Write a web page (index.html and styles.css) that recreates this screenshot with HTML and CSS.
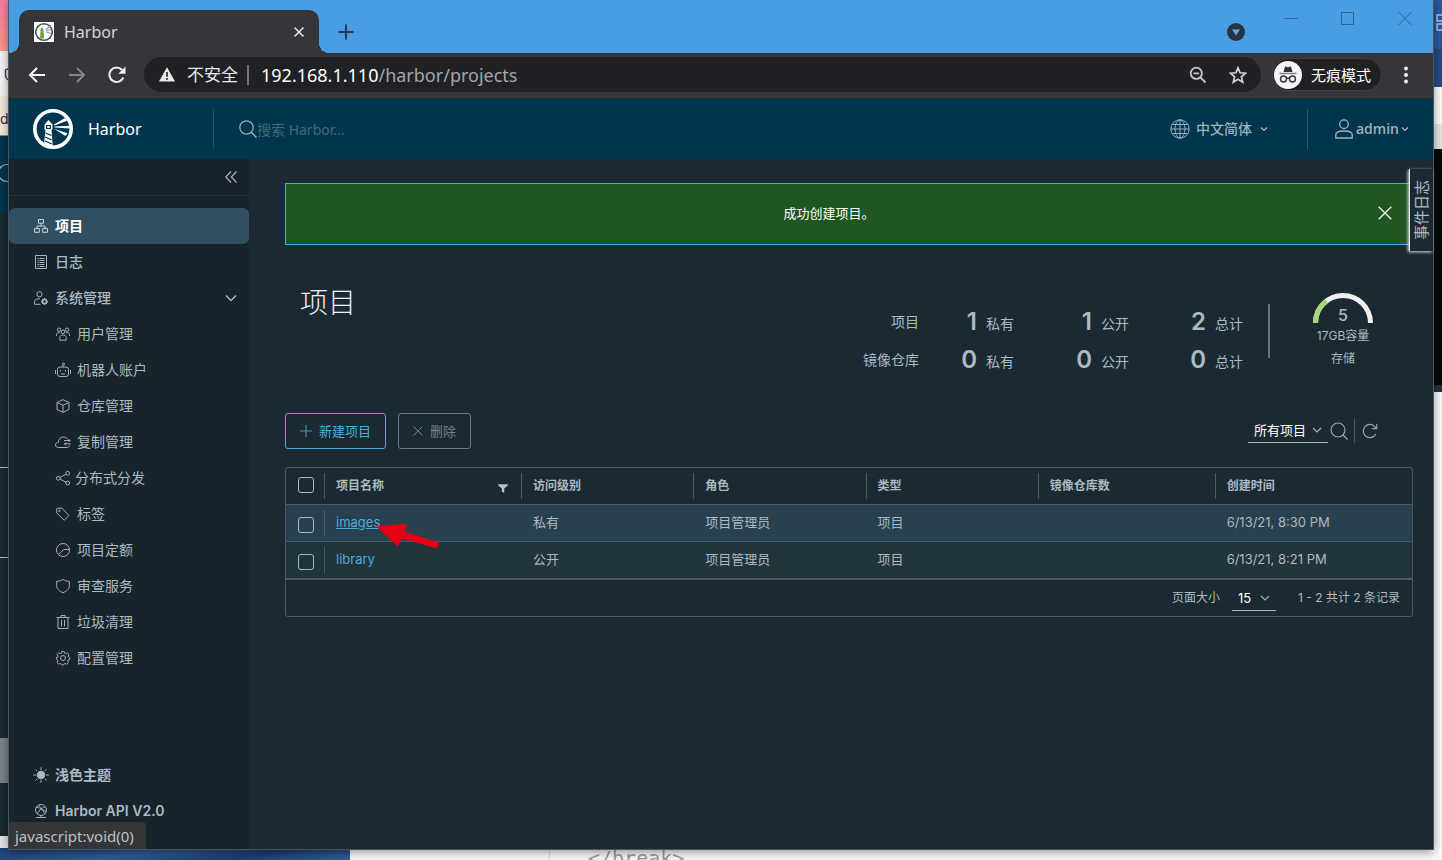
FILE: index.html
```html
<!DOCTYPE html>
<html lang="zh-CN">
<head>
<meta charset="utf-8">
<title>Harbor</title>
<link rel="stylesheet" href="styles.css">
</head>
<body>
<div class="desktop">
  <div class="strip strip-left" aria-hidden="true">
    <div class="pink"></div>
    <div class="paper"><svg width="9" height="16" viewBox="0 0 9 16"><path d="M10 1 5.500 3v5c0 3 2 5 5 6" fill="none" stroke="#3c3a5c" stroke-width="1.300"/></svg></div>
    <div class="cream">do</div>
    <div class="teal"><svg width="9" height="20" viewBox="0 0 9 20"><circle cx="7" cy="10" r="8.500" fill="none" stroke="#a9b9c2" stroke-width="1.200"/></svg></div>
    <div class="dark"></div>
    <div class="dark-mid"></div>
    <div class="dark-rest"></div>
    <div class="grey"></div>
    <div class="dark-low"></div>
    <div class="light"></div>
  </div>
  <div class="strip strip-right" aria-hidden="true">
    <div class="blue"><svg width="9" height="18" viewBox="0 0 9 18"><path d="M4 1h7v6H4zM4 10h7v6H4z" fill="none" stroke="#b9c8e2" stroke-width="1.500"/></svg></div>
    <div class="blue-deep"></div>
    <div class="white"></div>
    <div class="silver"></div>
    <div class="black"></div>
    <div class="teal-line"></div>
    <div class="white-rest"></div>
  </div>
  <div class="strip strip-bottom" aria-hidden="true">
    <div class="sea"></div>
    <div class="gutter"></div>
    <div class="code">&lt;/break&gt;</div>
  </div>

  <div class="window">
    <div class="titlebar">
      <div class="tab">
        <svg class="favicon" width="20" height="20" viewBox="0 0 20 20"><rect width="20" height="20" fill="#fff"/><circle cx="10" cy="10" r="8.300" fill="none" stroke="#4b5257" stroke-width="1.600"/><path d="M6.500 7 8 5.200 9.500 7v2l.6 7.500H6L6.500 9z" fill="#6da13e"/><path d="m11.500 7.500 5-3.500M12 8.500l5-.8M12 9.800l5 1.800" stroke="#6d9bd0" stroke-width="1.100"/></svg>
        <span class="tab-title">Harbor</span>
        <button class="tab-close" aria-label="关闭标签页"><svg width="12" height="12" viewBox="0 0 12 12"><path d="m1.500 1.500 9 9m0-9-9 9" stroke="#dcdde0" stroke-width="1.700"/></svg></button>
      </div>
      <button class="new-tab" aria-label="新标签页"><svg width="16" height="16" viewBox="0 0 16 16"><path d="M8 .5v15M.5 8h15" stroke="#25384c" stroke-width="2"/></svg></button>
      <button class="tab-search" aria-label="搜索标签页"><svg width="18" height="18" viewBox="0 0 18 18"><circle cx="9" cy="9" r="9" fill="#263340"/><path d="M5 6.500h8L9 12.500z" fill="#56aef0"/></svg></button>
      <div class="win-controls">
        <button aria-label="最小化"><svg width="14" height="14" viewBox="0 0 14 14"><path d="M.5 7.500h13" stroke="#2c648f"/></svg></button>
        <button aria-label="最大化"><svg width="14" height="14" viewBox="0 0 14 14"><path d="M.5 1.500h12v12H.5z" fill="none" stroke="#2c648f"/></svg></button>
        <button aria-label="关闭"><svg width="14" height="14" viewBox="0 0 14 14"><path d="m.5 1 13 13m0-13-13 13" stroke="#2c648f"/></svg></button>
      </div>
    </div>

    <div class="toolbar">
      <button class="tool" aria-label="后退"><svg width="18" height="18" viewBox="0 0 18 18"><path d="M17 9H2M9 2 2 9l7 7" fill="none" stroke="#fff" stroke-width="2"/></svg></button>
      <button class="tool" aria-label="前进"><svg width="18" height="18" viewBox="0 0 18 18"><path d="M1 9h15M9 2l7 7-7 7" fill="none" stroke="#85868a" stroke-width="2"/></svg></button>
      <button class="tool" aria-label="刷新"><svg width="18" height="18" viewBox="0 0 18 18"><path d="M15.300 11.500A7.200 7.200 0 1 1 14 4" fill="none" stroke="#f0f0f1" stroke-width="2"/><path d="M17.500.5v7.200h-7.200z" fill="#f0f0f1"/></svg></button>
      <div class="omnibox">
        <svg width="16" height="15" viewBox="0 0 16 15"><path d="M8 .3 16 14.500H0z" fill="#e9e9ea"/><path d="M8 5v4.800M8 11v1.700" stroke="#202124" stroke-width="1.600"/></svg>
        <span class="insecure">不安全</span>
        <span class="omni-divider"></span>
        <span class="url"><b>192.168.1.110</b>/harbor/projects</span>
        <button class="omni-zoom" aria-label="缩放"><svg width="18" height="18" viewBox="0 0 18 18"><circle cx="7.300" cy="7.300" r="5.600" fill="none" stroke="#c6c7c9" stroke-width="1.800"/><path d="m11.500 11.500 5 5M4.500 7.300h5.600" stroke="#c6c7c9" stroke-width="1.800"/></svg></button>
        <button class="omni-star" aria-label="收藏"><svg width="18" height="18" viewBox="0 0 18 18"><path d="m9 1.800 2.100 5 5.400.4-4.100 3.600 1.300 5.300L9 13.200l-4.700 2.900 1.300-5.300L1.500 7.200l5.400-.4z" fill="none" stroke="#d3d4d6" stroke-width="1.700"/></svg></button>
      </div>
      <div class="incognito">
        <svg width="28" height="28" viewBox="0 0 28 28"><circle cx="14" cy="14" r="14" fill="#f4f5f7"/><path d="m9.500 11 1.500-5.500 3 .8 3-.8 1.500 5.500z" fill="#303134"/><path d="M5.500 12.500h17" stroke="#77797c" stroke-width="1.400"/><circle cx="9.500" cy="18" r="3" fill="none" stroke="#303134" stroke-width="1.400"/><circle cx="18.500" cy="18" r="3" fill="none" stroke="#303134" stroke-width="1.400"/><path d="M12.500 17.500q1.500-1 3 0" fill="none" stroke="#303134" stroke-width="1.300"/></svg>
        <span>无痕模式</span>
      </div>
      <button class="menu" aria-label="菜单"><svg width="6" height="18" viewBox="0 0 6 18"><g fill="#f0f0f1"><circle cx="3" cy="2.500" r="2"/><circle cx="3" cy="9" r="2"/><circle cx="3" cy="15.500" r="2"/></g></svg></button>
    </div>

    <header class="header">
      <a class="brand" href="#">
        <svg width="40" height="40" viewBox="0 0 40 40"><circle cx="20" cy="20" r="18.200" fill="none" stroke="#fff" stroke-width="3.600"/><path d="M11.500 15.500 15.500 11l4 4.500v5h-1l1.300 17L11 35l1.500-14.500h-1z" fill="#fff"/><path d="M13.700 16.500h3.600v3h-3.600zM12.500 24l6 2.500M12.200 28l6.600 3M12 32l7 3" fill="none" stroke="#00364d" stroke-width="1.200"/><path d="m21 15.500 11-6.500 2.500 2.500-13 5zM21.500 17.600l15-.8v2.800l-15-1zM21 19.800l13.500 4.400-2 2.800z" fill="#fff"/></svg>
        <span>Harbor</span>
      </a>
      <label class="search">
        <svg width="18" height="18" viewBox="0 0 18 18"><circle cx="7.500" cy="7.500" r="6.700" fill="none" stroke="#9db1bb" stroke-width="1.200"/><path d="m12.300 12.300 5.200 5.200" stroke="#9db1bb" stroke-width="1.300"/></svg>
        <input type="search" placeholder="搜索 Harbor..." aria-label="搜索 Harbor">
      </label>
      <button class="lang">
        <svg width="20" height="20" viewBox="0 0 20 20"><g fill="none" stroke="#9bb0ba"><circle cx="10" cy="10" r="9.200"/><ellipse cx="10" cy="10" rx="5" ry="9.200"/><path d="M10 1v18M1 10h18M2.500 5.500h15M2.500 14.500h15"/></g></svg>
        <span>中文简体</span>
        <svg class="caret" width="8" height="8" viewBox="0 0 8 8"><path d="m1 2.500 3 3 3-3" fill="none" stroke="#aab9c1" stroke-width="1.200"/></svg>
      </button>
      <button class="user">
        <svg width="18" height="20" viewBox="0 0 18 20"><g fill="none" stroke="#9bb0ba" stroke-width="1.300"><circle cx="9" cy="5.200" r="4.300"/><path d="M.8 19v-3.200c0-2.500 4-3.800 8.200-3.800s8.200 1.300 8.200 3.800V19z"/></g></svg>
        <span>admin</span>
        <svg class="caret" width="8" height="8" viewBox="0 0 8 8"><path d="m1 2.500 3 3 3-3" fill="none" stroke="#aab9c1" stroke-width="1.200"/></svg>
      </button>
    </header>

    <div class="content">
      <nav class="sidebar">
        <button class="collapse" aria-label="收起"><svg width="12" height="12" viewBox="0 0 12 12"><path d="M6 .5.800 6 6 11.500M11.500.5 6.300 6l5.200 5.500" fill="none" stroke="#a9b8c0" stroke-width="1.100"/></svg></button>
        <div class="nav-list">
          <a class="nav-item active" href="#"><svg class="icon" viewBox="0 0 14 14"><path d="M4.500.5h5v3.700h-5zM.5 9.500h4.800v3.800H.5zM8.700 9.500h4.800v3.800H8.700zM7 4v3M3 9V7h8v2"/></svg><span>项目</span></a>
          <a class="nav-item" href="#"><svg class="icon" viewBox="0 0 14 14"><path d="M1.500.5h11v13h-11z"/><path d="M3.500 3.500h1.200M5.500 3.500h5M3.500 5.500h1.200M5.500 5.500h5M3.500 7.500h1.200M5.500 7.500h5M3.500 9.500h1.200M5.500 9.500h5M3.500 11.500h1.200M5.500 11.500h5"/></svg><span>日志</span></a>
          <button class="nav-item"><svg class="icon" viewBox="0 0 14 14"><circle cx="5.500" cy="3.200" r="2.600"/><path d="M6.500 13.300H.5v-2.500C.5 9 2.600 7.500 6 7.700"/><circle cx="10.500" cy="10.500" r="2.100" stroke-width="1.800"/><path d="M10.500 7v1.500M10.500 12.500V14M7 10.500h1.500M12.500 10.500H14M8 8l1 1m3 3 1 1m0-5-1 1m-3 3-1 1"/></svg><span>系统管理</span><svg class="chev" width="12" height="12" viewBox="0 0 12 12"><path d="m1 3.500 5 5 5-5" fill="none" stroke="#b3c0c7" stroke-width="1.300"/></svg></button>
          <a class="nav-item child" href="#"><svg class="icon" viewBox="0 0 14 14"><circle cx="7" cy="4.800" r="1.800"/><circle cx="3" cy="2.700" r="1.700"/><circle cx="11" cy="2.700" r="1.700"/><path d="M3.800 13.200V10.500C3.800 9 5 8 7 8s3.200 1 3.200 2.500v2.700zM.5 9V7.500C.5 6 1.500 5.500 4 5.700M13.500 9V7.500c0-1.500-1-2-3.500-1.800"/></svg><span>用户管理</span></a>
          <a class="nav-item child" href="#"><svg class="icon" viewBox="0 0 14 14"><rect x="1.500" y="4" width="11" height="9.500" rx="2.500"/><circle cx="7.500" cy="1" r="1"/><path d="M7 2v2M-.5 7v4M14.500 7v4M4.500 7v1.500M9.500 7v1.500M5 11h4"/></svg><span>机器人账户</span></a>
          <a class="nav-item child" href="#"><svg class="icon" viewBox="0 0 14 14"><path d="m7 .7 6 2.800v7l-6 2.900-6-2.900v-7zM1 3.500l6 2.800 6-2.800M7 6.300v7"/></svg><span>仓库管理</span></a>
          <a class="nav-item child" href="#"><svg class="icon" viewBox="0 0 14 14"><path d="M13.500 10.500c-.5 1.500-1.500 2-2.500 2H2.500C.7 12.500-.5 11.300-.5 10c0-1.500 1.300-2.500 2.800-2.600C2.300 4.500 4.500 2 7.300 2c2 0 3.300 1 4 2.200M8 5.500h6M12.500 4 14 5.500 12.500 7M14.500 8.800H8.500M10 7.300 8.500 8.800l1.500 1.500"/></svg><span>复制管理</span></a>
          <a class="nav-item child tight" href="#"><svg class="icon" viewBox="0 0 14 14"><circle cx="2.300" cy="7.300" r="1.900"/><circle cx="11.700" cy="2.300" r="1.900"/><circle cx="11.700" cy="12" r="1.900"/><path d="m4 6.400 6-3.200M4 8.200l6 3"/></svg><span>分布式分发</span></a>
          <a class="nav-item child" href="#"><svg class="icon" viewBox="0 0 14 14"><path d="M.8 1.500V6l7.400 7.200 4.800-4.700-7-7.300H1z"/><circle cx="3.500" cy="3.800" r=".7"/></svg><span>标签</span></a>
          <a class="nav-item child" href="#"><svg class="icon" viewBox="0 0 14 14"><circle cx="7" cy="7" r="6.500"/><path d="M13.300 6.500H7.800L2.500 11.500"/></svg><span>项目定额</span></a>
          <a class="nav-item child" href="#"><svg class="icon" viewBox="0 0 14 14"><path d="M7 .4c1.800 1.300 3.800 1.800 6.300 1.900v4.400c0 3-2.300 5.400-6.300 7-4-1.600-6.300-4-6.300-7V2.300C3.200 2.200 5.200 1.700 7 .4z"/></svg><span>审查服务</span></a>
          <a class="nav-item child" href="#"><svg class="icon" viewBox="0 0 14 14"><path d="M.5 2.500h13M5 2V.5h4V2M2 3v10.500h10V3M5.500 5v6.500M8.500 5v6.500"/></svg><span>垃圾清理</span></a>
          <a class="nav-item child" href="#"><svg class="icon" viewBox="0 0 14 14"><circle cx="7" cy="7" r="2.500"/><path d="m5.700.6h2.600l.4 1.700 1 .4 1.500-.9 1.800 1.800-.9 1.500.4 1 1.100.3v2l-1.500.6-.4 1 .8 1.500-1.800 1.800-1.500-.9-1 .4-.4 1H5.700l-.4-1-1-.4-1.500.9L1 11.500l.9-1.500-.4-1L.4 8.400v-2l1.400-.3.4-1L1 3.600l1.800-1.800 1.500.9 1-.4z"/></svg><span>配置管理</span></a>
        </div>
        <div class="nav-foot">
          <button class="nav-item"><svg class="icon" viewBox="0 0 14 14"><circle cx="7" cy="7" r="3.800" fill="#acbac3"/><path d="M7-.8v3M7 11.800v3M-.8 7h3M11.800 7h3M1.500 1.500l1.700 1.700M10.800 10.800l1.700 1.700M12.500 1.500l-1.700 1.700M3.200 10.800l-1.700 1.700"/></svg><span>浅色主题</span></button>
          <a class="nav-item" href="#"><svg class="icon" viewBox="0 0 14 14"><circle cx="7" cy="6" r="5.500"/><path d="M2 3.500c3-.5 7 2 8.500 6M11.500 3C9 3 5 5.500 3.500 10M4.500 1.200C6 4 9 6.500 12.300 7.500M2 13.500h10M7 11.500v2"/></svg><span>Harbor API V2.0</span></a>
        </div>
      </nav>

      <main class="main">
        <div class="alert" role="status">
          <span>成功创建项目。</span>
          <button class="alert-close" aria-label="关闭"><svg width="14" height="14" viewBox="0 0 14 14"><path d="m.7.7 12.600 12.600m0-12.600L.7 13.300" stroke="#f3f6f4" stroke-width="1.300"/></svg></button>
        </div>

        <div class="summary">
          <h1>项目</h1>
          <div class="stats">
            <span class="stat-name">项目</span><b>1</b><span>私有</span><b>1</b><span>公开</span><b>2</b><span>总计</span>
            <span class="stat-name">镜像仓库</span><b>0</b><span>私有</span><b>0</b><span>公开</span><b>0</b><span>总计</span>
          </div>
          <div class="gauge">
            <div class="dial">
              <svg width="62" height="30" viewBox="0 0 62 30"><path d="M3.500 30a27.500 27.500 0 0 1 55 0" fill="none" stroke="#efefef" stroke-width="5"/><path d="M3.500 30A27.500 27.500 0 0 1 14.500 8" fill="none" stroke="#a5d67a" stroke-width="5"/></svg>
              <span>5</span>
            </div>
            <div class="cap">17GB容量</div>
            <div class="cap">存储</div>
          </div>
        </div>

        <div class="actions">
          <button class="btn primary"><svg width="12" height="12" viewBox="0 0 12 12"><path d="M6 0v12M0 6h12" stroke="#3f8fb3" stroke-width="1.200"/></svg>新建项目</button>
          <button class="btn" disabled><svg width="10" height="10" viewBox="0 0 10 10"><path d="m.5.5 9 9m0-9-9 9" stroke="#74828a"/></svg>删除</button>
          <div class="select filter">
            <select aria-label="项目筛选"><option>所有项目</option></select>
            <svg width="10" height="10" viewBox="0 0 10 10"><path d="m1 3 4 4 4-4" fill="none" stroke="#a3b1b8" stroke-width="1.200"/></svg>
          </div>
          <button class="plain" aria-label="搜索"><svg width="18" height="18" viewBox="0 0 18 18"><circle cx="8" cy="8" r="7" fill="none" stroke="#98a7af" stroke-width="1.200"/><path d="m13 13 4.500 4.500" stroke="#98a7af" stroke-width="1.300"/></svg></button>
          <button class="plain refresh" aria-label="刷新"><svg width="16" height="16" viewBox="0 0 16 16"><path d="M13.800 11A6.600 6.600 0 1 1 13 3.800L14.500 5.500M14.700 1v4.700H10" fill="none" stroke="#98a7af" stroke-width="1.200"/></svg></button>
        </div>

        <div class="grid">
          <table>
            <colgroup><col class="c-check"><col class="c-name"><col class="c-mid"><col class="c-mid"><col class="c-mid"><col class="c-count"><col></colgroup>
            <thead>
              <tr>
                <th><input type="checkbox" aria-label="全选"></th>
                <th><span class="th-name">项目名称<svg width="10" height="9" viewBox="0 0 10 9"><path d="M.2.300h9.600v1.200L6.200 4.500V9L3.800 7.500v-3L.2 1.500z" fill="#b9c1c4"/></svg></span></th>
                <th>访问级别</th><th>角色</th><th>类型</th><th>镜像仓库数</th><th>创建时间</th>
              </tr>
            </thead>
            <tbody>
              <tr class="hovered"><td><input type="checkbox" aria-label="选择 images"></td><td><a href="#">images</a></td><td>私有</td><td>项目管理员</td><td>项目</td><td></td><td>6/13/21, 8:30 PM</td></tr>
              <tr><td><input type="checkbox" aria-label="选择 library"></td><td><a href="#">library</a></td><td>公开</td><td>项目管理员</td><td>项目</td><td></td><td>6/13/21, 8:21 PM</td></tr>
            </tbody>
          </table>
          <div class="grid-foot">
            <label for="page-size">页面大小</label>
            <div class="select size">
              <select id="page-size"><option>15</option></select>
              <svg width="10" height="10" viewBox="0 0 10 10"><path d="m1 3 4 4 4-4" fill="none" stroke="#a3b1b8" stroke-width="1.200"/></svg>
            </div>
            <span class="total">1 - 2 共计 2 条记录</span>
          </div>
          <svg class="pointer" width="64" height="28" viewBox="0 0 64 28"><path d="M0 3.500 31 .5 28.500 8.500 63 19.500 61 25.500 26 15.500 22 23.500z" fill="#e60012"/></svg>
        </div>
      </main>
      <button class="event-log"><span>事件日志</span></button>
    </div>
    <div class="status">javascript:void(0)</div>
  </div>
</div>
</body>
</html>
```
FILE: styles.css
```css
* { box-sizing: border-box; }

body {
  margin: 0;
  font: 14px/20px Inter, "Noto Sans CJK SC", sans-serif;
  color: #acbac3;
}

button, input, select {
  font: inherit;
  color: inherit;
  background: none;
  border: 0;
  padding: 0;
  margin: 0;
}

svg { display: block; flex: none; }
a { color: inherit; text-decoration: none; }

/* desktop and the windows that peek out behind */
.desktop {
  position: relative;
  height: 100vh;
  overflow: hidden;
  background: #f9f9f9;
  padding: 0 9px 11px;
}
.strip { position: absolute; display: flex; flex-direction: column; }
.strip-left { left: 0; top: 0; bottom: 0; width: 9px; overflow: hidden; }
.strip-right { right: 0; top: 0; bottom: 0; width: 9px; overflow: hidden; }
.strip-bottom { left: 0; right: 0; bottom: 0; height: 12px; flex-direction: row; overflow: hidden; }
.pink { height: 51px; background: linear-gradient(#fb7ba6, #ff9b8b); }
.paper { height: 45px; background: #f6f4f4; padding-top: 16px; }
.cream { height: 40px; background: #f7e9dc; color: #2c2c3c; line-height: 45px; border-bottom: 1px solid #c07d5c; }
.teal { height: 76px; background: #00364d; padding-top: 27px; }
.dark { height: 256px; background: #1b2a32; border-bottom: 1px solid #b4c0c6; }
.dark-mid { height: 90px; background: #1b2a32; border-bottom: 1px solid #b4c0c6; }
.dark-rest { height: 180px; background: #1b2a32; }
.grey { height: 45px; background: #79838a; }
.dark-low { height: 53px; background: #1b2a32; }
.light { flex: 1; background: #e4e4e4; }
.blue { height: 49px; background: #2b579a; padding-top: 14px; }
.blue-deep { height: 38px; background: #244a80; }
.white { height: 37px; background: #fcfcfc; }
.silver { height: 25px; background: #e4e4e4; }
.black { height: 236px; background: #04090c; }
.teal-line { height: 7px; background: #22323b; }
.white-rest { flex: 1; background: #fafafa; }
.sea { width: 350px; background: linear-gradient(170deg, #1d3f74, #2c5c94 40%, #1b3d72 70%, #2f6096); }
.gutter { width: 200px; border-right: 1px solid #dcdcdc; }
.code { padding-left: 38px; font: 20px/20px "DejaVu Sans Mono", monospace; color: #999; }

/* browser window */
.window {
  position: relative;
  display: flex;
  flex-direction: column;
  height: 100%;
  background: #1b2a32;
  box-shadow: 0 0 0 1px #4a545a, 0 2px 10px rgba(0, 0, 0, .5);
}
.titlebar {
  display: flex;
  height: 53px;
  background: #489de3;
  padding-left: 10px;
}
.tab {
  position: relative;
  display: flex;
  align-items: center;
  width: 300px;
  margin-top: 10px;
  padding: 0 14px 0 15px;
  border-radius: 10px 10px 0 0;
  background: #35363a;
  color: #d5d6d9;
  font: 16px/20px "Noto Sans", "Noto Sans CJK SC", sans-serif;
}
.tab::before, .tab::after {
  content: "";
  position: absolute;
  bottom: 0;
  width: 10px;
  height: 10px;
}
.tab::before { left: -10px; background: radial-gradient(circle at 0 0, transparent 10px, #35363a 10px); }
.tab::after { right: -10px; background: radial-gradient(circle at 100% 0, transparent 10px, #35363a 10px); }
.tab-title { flex: 1; margin-left: 10px; }
.new-tab { margin: 10px auto 0 19px; }
.tab-search { margin: 10px 17px 0 0; }
.win-controls { display: flex; height: 36px; }
.win-controls button { display: grid; place-items: center; width: 57px; }

.toolbar {
  display: flex;
  align-items: center;
  height: 46px;
  padding: 0 11px 2px 8px;
  background: #35363a;
  border-bottom: 1px solid #26272a;
  font: 16px/20px "Noto Sans", "Noto Sans CJK SC", sans-serif;
}
.tool { display: grid; place-items: center; width: 40px; height: 40px; }
.omnibox {
  display: flex;
  flex: 1;
  align-items: center;
  height: 35px;
  margin-left: 7px;
  padding: 0 14px 0 15px;
  border-radius: 18px;
  background: #202124;
}
.insecure { margin-left: 12px; color: #e8eaed; font-size: 17px; }
.omni-divider { width: 2px; height: 20px; margin: 0 12px 0 9px; background: #74757a; }
.url { flex: 1; color: #a3a5a9; font: 18px/24px "Noto Sans", sans-serif; }
.url b { font-weight: 400; color: #fff; }
.omni-star { margin-left: 22px; }
.incognito {
  display: flex;
  align-items: center;
  height: 33px;
  margin-left: 11px;
  padding: 0 10px 0 1px;
  border: 1px solid #3f4044;
  border-radius: 17px;
  background: #202124;
  color: #fff;
  font-size: 15px;
}
.incognito span { margin-left: 9px; }
.menu { display: grid; place-items: center; width: 32px; margin-left: 8px; }

/* application header */
.header {
  display: flex;
  align-items: center;
  height: 60px;
  padding: 0 24px;
  background: #00364d;
}
.brand {
  display: flex;
  align-items: center;
  width: 181px;
  height: 40px;
  border-right: 1px solid #264f62;
  color: #fff;
  font: 16px/20px "Noto Sans", sans-serif;
}
.brand span { margin-left: 15px; }
.search { display: flex; flex: 1; align-items: center; margin-left: 25px; }
.search input { flex: 1; min-width: 0; height: 24px; outline: 0; font: 14px/20px "Noto Sans", "Noto Sans CJK SC", sans-serif; }
.search input::placeholder { color: #42687a; opacity: 1; }
.lang, .user {
  display: flex;
  align-items: center;
  height: 40px;
  font: 500 14px/20px "Open Sans", "Noto Sans CJK SC", sans-serif;
  color: #9fb2bc;
}
.lang span { margin: 0 8px 0 6px; }
.lang { padding-right: 39px; border-right: 1px solid #31586a; }
.user { padding-left: 27px; font-weight: 600; }
.user span { margin: 0 2px 0 3px; }

/* sidebar */
.content { position: relative; display: flex; flex: 1; min-height: 0; }
.sidebar {
  display: flex;
  flex-direction: column;
  width: 240px;
  background: #17242b;
  padding-bottom: 20px;
}
.collapse {
  display: flex;
  align-items: center;
  justify-content: flex-end;
  height: 37px;
  padding-right: 12px;
  border-bottom: 1px solid #223138;
}
.nav-list { flex: 1; padding-top: 12px; }
.nav-item {
  display: flex;
  align-items: center;
  width: 100%;
  height: 36px;
  padding: 0 12px 0 25px;
  border-radius: 6px;
  font-weight: 500;
  text-align: left;
}
.nav-item span { flex: 1; margin-left: 7px; }
.nav-item.active { background: #324f62; color: #fff; font-weight: 700; }
.nav-item.child { padding-left: 47px; font-weight: 400; }
.nav-item.tight span { margin-left: 5px; }
.nav-foot .nav-item { font-weight: 600; }
.icon {
  width: 14px;
  height: 14px;
  overflow: visible;
  fill: none;
  stroke: #a3b1b9;
}
.active .icon { stroke: #c9d3d8; }

/* main column */
.main { display: flex; flex: 1; flex-direction: column; min-width: 0; padding: 24px 20px 0 36px; }
.alert {
  display: flex;
  align-items: center;
  height: 62px;
  padding: 0 20px 2px 14px;
  border: 1px solid #49afd9;
  background: #205622;
  color: #fff;
  font-size: 13px;
}
.alert span { flex: 1; padding-right: 20px; text-align: center; }
.summary { display: flex; height: 168px; padding: 38px 40px 0 15px; }
h1 { flex: 1; margin: 0; color: #eef2f4; font-size: 28px; line-height: 40px; font-weight: 300; }
.stats {
  display: grid;
  grid-template-columns: 60px 58px 28px 87px 28px 86px 28px;
  grid-auto-rows: 38px;
  align-items: center;
  height: 92px;
  padding-top: 20px;
}
.stats span { padding-top: 4px; white-space: nowrap; }
.stats .stat-name { padding-top: 0; text-align: right; }
.stats span:not(.stat-name) { margin-left: 9px; }
.stats b { text-align: right; font-size: 24px; line-height: 30px; font-weight: 600; }
.gauge {
  position: relative;
  width: 105px;
  margin-left: 34px;
  padding: 10px 0 0 44px;
  text-align: center;
}
.gauge::before {
  content: "";
  position: absolute;
  left: 0;
  top: 21px;
  width: 2px;
  height: 54px;
  background: #65737a;
}
.dial { position: relative; width: 62px; height: 31px; }
.dial span { position: absolute; left: 0; right: 0; bottom: -1px; font-size: 16px; font-weight: 500; }
.cap { width: 62px; font-size: 12px; line-height: 23px; white-space: nowrap; }

.actions { display: flex; align-items: center; height: 36px; padding-right: 35px; }
.btn {
  display: flex;
  align-items: center;
  height: 36px;
  padding: 0 14px;
  border: 1px solid #6d7a81;
  border-radius: 3px;
  color: #74828a;
  font-size: 13px;
}
.btn svg { margin-right: 7px; }
.btn.primary { margin-right: 12px; border-color: #49afd9; color: #49afd9; }
.select { position: relative; border-bottom: 1px solid #acbac3; color: #fff; font-size: 13px; }
.select select { width: 100%; height: 24px; appearance: none; outline: 0; }
.select svg { position: absolute; right: 6px; top: 7px; pointer-events: none; }
.filter { width: 80px; margin: 0 0 2px auto; }
.filter select { padding-left: 6px; }
.plain { margin-left: 2px; }
.refresh { margin-left: 6px; padding: 4px 0 4px 7px; border-left: 1px solid #4a5a63; }

/* data grid */
.grid { position: relative; margin-top: 18px; border: 1px solid #495a64; border-radius: 3px; font-size: 13px; }
table { width: 100%; border-collapse: separate; border-spacing: 0; table-layout: fixed; }
.c-check { width: 38px; }
.c-name { width: 17.5%; }
.c-mid { width: 15.3%; }
.c-count { width: 15.7%; }
th, td {
  position: relative;
  height: 37px;
  padding: 0 12px;
  border-bottom: 1px solid #495a64;
  text-align: left;
  line-height: 20px;
}
td { padding-bottom: 2px; }
th { font-size: 12px; font-weight: 600; }
th + th::before, td:nth-child(2)::before {
  content: "";
  position: absolute;
  left: 0;
  top: 5px;
  bottom: 5px;
  width: 1px;
  background: #495a64;
}
tbody tr { background: #22343c; }
tbody .hovered { background: #29404e; }
tbody tr:last-child td { border-bottom: 2px solid #495a64; height: 38px; }
td a { color: #49afd9; }
.hovered a { text-decoration: underline; }
.th-name { display: flex; align-items: center; justify-content: space-between; }
.th-name svg { margin: 4px 1px 0 0; }
input[type="checkbox"] {
  display: block;
  width: 16px;
  height: 16px;
  appearance: none;
  border: 1px solid #acbac3;
  border-radius: 3px;
}
th input[type="checkbox"] { margin-bottom: 2px; }
td input[type="checkbox"] { margin-top: 6px; }
.grid-foot { display: flex; align-items: center; justify-content: flex-end; height: 36px; padding-right: 12px; font-size: 12px; }
.size { width: 44px; margin: 0 22px 0 12px; }
.size select { padding-left: 6px; }
.pointer { position: absolute; left: 90px; top: 55px; }

.event-log {
  position: absolute;
  right: 0;
  top: 10px;
  display: grid;
  place-items: center;
  width: 24px;
  height: 82px;
  border-left: 1px solid #e4e8ea;
  background: #1b2a32;
  box-shadow: -1px 1px 3px #dfe3e5;
  font-size: 15px;
}
.event-log span { writing-mode: vertical-rl; text-orientation: sideways; transform: rotate(180deg); }

.status {
  position: absolute;
  left: 0;
  bottom: 0;
  height: 27px;
  padding: 0 12px 0 6px;
  border-radius: 0 4px 0 0;
  background: #35363a;
  color: #bdc1c6;
  font: 15px/29px "Noto Sans", sans-serif;
}
```
